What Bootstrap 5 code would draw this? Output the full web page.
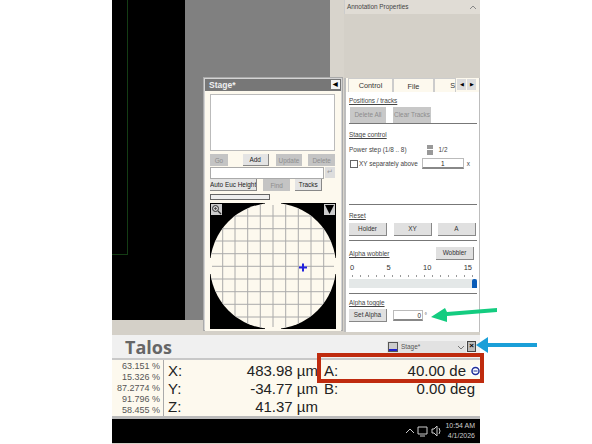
<!DOCTYPE html>
<html lang="en"><head><meta charset="utf-8"><title>Talos</title>
<link href="https://cdn.jsdelivr.net/npm/bootstrap@5.3.0/dist/css/bootstrap.min.css" rel="stylesheet">
<style>
html,body{margin:0;height:444px;width:592px;overflow:hidden;background:#fff;font-family:"Liberation Sans",Arial,sans-serif;font-size:6.4px;color:#333}
.app{width:368px;height:444px;margin-left:112px;position:relative;background:#d4d0c8}
.top-area{height:320px}
.black-pane{width:73px;background:#000}
.green-frame{width:16px;height:255px;border-right:1px solid #143c14;border-bottom:1px solid #143c14}
.grey-pane{width:145px;background:#808080}
.lane{width:14px;background:#d8d4cc}
.side-top{width:136px;background:#d4d0c8;color:#444}
.side-head{height:14px;padding:0 4px 0 2px;background:#e0dcd5;border-left:1px solid #ccc}
.strip{height:15px;background:#d4d0c8}
.head-bar{height:25px;background:#f0f0f0;padding:0 4px 0 13px;border-bottom:2px solid #c8c8c8}
.talos{font-size:18px;font-weight:700;color:#666;line-height:24px;font-family:"Open Sans","Liberation Sans",sans-serif}
.combo{width:79px;height:12px;background:#e2e2e2;font-size:6.4px;color:#555;margin-left:auto;margin-right:1px;line-height:12px;padding-right:2px}
.combo-ico{width:10px;height:10px;border:1px solid #555;background:linear-gradient(#ccc 70%,#22c 70%);margin:1px 3px 0 1px}
.chev{margin:5px 0 0 auto}
.close-x{width:9px;height:11px;background:#bbb;border:1px solid #444;font-size:8px;line-height:8px;text-align:center;color:#000;font-weight:700}
.readout{height:59px;background:#fdf9ee;border-bottom:3px solid #bbb}
.pct{width:52px;border-right:1px solid #aaa;text-align:right;padding:1px 3px 0 0;font-size:9px;line-height:11px;color:#555}
.pos{flex:1;font-size:15px;line-height:18px;color:#222;padding:2px 0 0 4px}
.rline{display:flex;height:18px}
.col-a{width:156px}.col-b{width:151px}
.rval{margin-left:auto;white-space:nowrap}
.xval{padding-right:6px}
.aval{padding-right:9px}
.taskbar{height:24px;background:#000;color:#ccc;font-size:7px;padding-right:5px}
.clock{text-align:right;line-height:10px}
.win{position:absolute;background:#d4d4d4;border:1px solid #aaa}
.stage-win{left:91px;top:77px;width:140px;height:254px;padding:1px}
.stage-title{height:12px;background:#777;color:#f0f0f0;font-size:8.500px;font-weight:700;line-height:12px;padding-left:4px}
.stage-pin{width:9px;height:9px;background:#f4f4f4;margin:1px 1px 0 auto;color:#000;font-size:6px;line-height:9px;text-align:center}
.stage-body{background:#fdf9ee;height:240px;padding:3px 6px 0 5px}
.listarea{height:57px;background:#fff;border:1px solid #bbb;margin-bottom:3px}
.sbtn{display:block;background:#e4e4e4;border:0;border-right:1px solid #888;border-bottom:1px solid #888;font-size:6.4px;color:#222;text-align:center;height:12px;line-height:11px;padding:0;white-space:nowrap;overflow:hidden}
.sbtn-off{background:#c4c4c4;color:#8d8d8d;border:0}
.w-go{width:18px;margin-right:15px}.w-add{width:26px;margin-right:7px}.w-upd{width:27px;margin-right:6px}.w-del{width:27px}
.w-auto{width:60px;margin-right:6px}.w-find{width:27px;margin-right:5px}.w-tr{width:27px}
.gap-row{margin-top:1px}
.txt-in{width:114px;height:12px;background:#fff;border:1px solid #aaa}
.enter-b{width:10px;height:11px;background:#ddd;margin-left:1px;color:#999;font-size:7px;line-height:10px;text-align:center}
.prog{width:60px;height:6px;border:1px solid #666;background:#eee;margin:3px 0 3px}
.side-win{left:232px;top:78px;width:136px;height:254px;background:#bdbdbd;border:0;padding:0 1px 0 2px}
.tabrow{height:14px;background:#fdf9ee;font-size:7.300px;line-height:14px;padding-left:2px}
.mytab{border:1px solid #ccc;border-bottom:0;text-align:center;color:#333;background:#fdf9ee}
.tab-on{width:45px}
.tab-b{width:41px;padding-top:1px}
.tab-c{width:22px;text-align:right}
.tabscroll{width:9px;height:11px;background:#ddd;font-size:5px;line-height:11px;text-align:center;color:#000;margin:1px 0 0 1px}
.panel-main{background:#fff;height:240px;padding:0 2px 0 3px;color:#444}
.psec{border-bottom:1px solid #777}
.u{text-decoration:underline;line-height:9px}
.gbtn{background:#c8c8c8;color:#8d8d8d;font-size:6.4px;border:0;height:16px;line-height:16px;padding:0;text-align:center;white-space:nowrap}
.w38{margin-right:7px}.w38b{margin-right:6px}
.rbtn{background:#e0e0e0;border:0;border-right:1px solid #888;border-bottom:1px solid #888;color:#333;font-size:6.4px;height:13px;line-height:12px;padding:0;text-align:center;width:38px;white-space:nowrap}
.spin{width:6px;height:10px;background:linear-gradient(#999 45%,#fff 45%,#fff 55%,#999 55%);margin:0 6px 0 20px}
.ck{width:8px;height:8px;border:1px solid #666;background:#fff;margin:0 1px}
.numin{width:42px;height:11px;background:#fff;border:1px solid #bbb;border-bottom:2px solid #888;text-align:center;color:#222;line-height:9px}
.track{height:9px;background:#e4e8e8;position:relative;margin-top:2px}
.thumb{position:absolute;right:0;top:0;width:5px;height:9px;background:#0a5cb8;border-radius:2px 2px 0 0}
.ticks{height:2px;margin:3px 3px 0;background:repeating-linear-gradient(90deg,#999 0,#999 1px,transparent 1px,transparent 8px)}
.scale{margin-top:3px;color:#333;font-size:7.500px;line-height:9px;padding:0 5px 0 1px}
.overlay{position:absolute;left:0;top:0;overflow:visible;pointer-events:none}
.red-box{position:absolute;left:205px;top:353px;width:167px;height:30px;border:4px solid #bf2b0e}
.ab-tag{position:absolute;left:359px;top:366px;width:9px;height:10px}
.sec1{height:32px;padding-top:4px}.sec2{height:81px;padding-top:6px}.sec3{height:36px;padding-top:6px}.sec4{height:53px;padding-top:6px}.sec5{padding-top:4px}
.map-svg{display:block}
</style></head><body>
<div class="app">
 <div class="top-area d-flex">
  <div class="black-pane"><div class="green-frame"></div></div>
  <div class="grey-pane"></div>
  <div class="lane"></div>
  <div class="side-top"><div class="side-head d-flex align-items-center justify-content-between"><span>Annotation Properties</span><svg width="6" height="4" viewBox="0 0 6 4" fill="none" stroke="#888"><path d="M0 4l3-3 3 3"/></svg></div></div>
 </div>
 <div class="strip"></div>
 <div class="head-bar d-flex align-items-center"><div class="talos">Talos</div>
  <div class="combo d-flex"><div class="combo-ico"></div><span>Stage*</span><svg class="chev" width="6" height="4" viewBox="0 0 6 4" fill="none" stroke="#777"><path d="M0 0l3 3 3-3"/></svg></div><div class="close-x">×</div></div>
 <div class="readout d-flex">
  <div class="pct">63.151 %<br>15.326 %<br>87.2774 %<br>91.796 %<br>58.455 %</div>
  <div class="pos d-flex">
   <div class="col-a"><div class="rline"><span>X:</span><span class="rval xval">483.98 µm</span></div><div class="rline"><span>Y:</span><span class="rval xval">-34.77 µm</span></div><div class="rline"><span>Z:</span><span class="rval xval">41.37 µm</span></div></div>
   <div class="col-b"><div class="rline"><span>A:</span><span class="rval aval">40.00 de</span></div><div class="rline"><span>B:</span><span class="rval">0.00 deg</span></div></div>
  </div>
 </div>
 <div class="taskbar d-flex align-items-center justify-content-end gap-2">
  <svg width="36" height="14" viewBox="0 0 36 14" fill="none" stroke="#ccc"><path d="M0 9l4-4 4 4"/><path d="M12 3h9v7h-9zM14 12h5"/><path d="M26 5v4h2l3 3V2l-3 3zM33 4q2 3 0 6"/></svg>
  <div class="clock">10:54 AM<br>4/1/2026</div>
 </div>

 <div class="win stage-win">
  <div class="stage-title d-flex">Stage*<div class="stage-pin">◀</div></div>
  <div class="stage-body">
   <div class="listarea"></div>
   <div class="d-flex"><button class="sbtn sbtn-off w-go">Go</button><button class="sbtn w-add">Add</button><button class="sbtn sbtn-off w-upd">Update</button><button class="sbtn sbtn-off w-del">Delete</button></div>
   <div class="d-flex gap-row"><div class="txt-in"></div><div class="enter-b">↵</div></div>
   <div class="d-flex"><button class="sbtn w-auto">Auto Euc Height</button><button class="sbtn sbtn-off w-find">Find</button><button class="sbtn w-tr">Tracks</button></div>
   <div class="prog"></div>
   <svg class="map-svg" width="126" height="126" viewBox="0 0 126 126">
    <defs><clipPath id="cc"><circle cx="63" cy="63" r="63"/></clipPath></defs>
    <rect width="126" height="126" fill="#000"/>
    <circle cx="63" cy="63" r="63" fill="#fdf9ee"/>
    <path d="M55 0h16v126H55zM0 55h126v16H0z" fill="#fdf9ee"/>
    <g clip-path="url(#cc)" stroke="#aaa" stroke-width="1">
     <path d="M12.700 0V126M25 0V126M37.700 0V126M50.300 0V126M63 2V124M75.700 0V126M88.300 0V126M101 0V126M113.700 0V126"/>
     <path d="M0 13H126M0 25.700H126M0 38H126M0 50.700H126M2 63.300H124M0 76H126M0 88.700H126M0 101.300H126M0 114H126"/>
    </g>
    <path d="M93 60.500v8M89 64.500h8" stroke="#2222dd" stroke-width="2"/>
    <rect x="1" y="1" width="11" height="11" fill="#ccc"/>
    <circle cx="5.500" cy="5.500" r="3" fill="none" stroke="#333"/><path d="M8 8l3 3" stroke="#333" stroke-width="1.300"/><path d="M4 5.500h3M5.500 4v3" stroke="#333" stroke-width=".7"/>
    <rect x="114" y="1" width="11" height="11" fill="#ccc"/><path d="M115 2h9l-4.500 9z" fill="#000"/>
   </svg>
  </div>
 </div>

 <div class="win side-win">
  <div class="tabrow d-flex"><div class="mytab tab-on">Control</div><div class="mytab tab-b">File</div><div class="mytab tab-c">S</div><div class="tabscroll">◀</div><div class="tabscroll">▶</div></div>
  <div class="panel-main">
   <div class="psec sec1"><div class="u">Positions / tracks</div><div class="d-flex" style="margin-top:2px"><button class="gbtn w38" style="width:36px;margin-left:1px">Delete All</button><button class="gbtn" style="width:38px">Clear Tracks</button></div></div>
   <div class="psec sec2"><div class="u">Stage control</div>
    <div class="d-flex align-items-center" style="margin-top:5px;height:12px"><span>Power step (1/8 .. 8)</span><div class="spin"></div><span>1/2</span></div>
    <div class="d-flex align-items-center" style="margin-top:2px"><div class="ck"></div><span>XY separately above</span><div class="numin ms-auto" style="margin-right:3px">1</div><span style="margin-right:7px">x</span></div></div>
   <div class="psec sec3"><div class="u">Reset</div><div class="d-flex" style="margin-top:3px"><button class="rbtn w38">Holder</button><button class="rbtn w38b">XY</button><button class="rbtn">A</button></div></div>
   <div class="psec sec4"><div class="d-flex align-items-center"><span class="u">Alpha wobbler</span><button class="rbtn ms-auto" style="margin-right:3px">Wobbler</button></div>
    <div class="d-flex justify-content-between scale"><span>0</span><span>5</span><span>10</span><span>15</span></div>
    <div class="ticks"></div><div class="track"><div class="thumb"></div></div></div>
   <div class="sec5"><div class="u">Alpha toggle</div><div class="d-flex align-items-center" style="margin-top:2px"><button class="rbtn" style="margin-right:6px">Set Alpha</button><div class="numin" style="width:30px;text-align:right;padding-right:1px">0</div><span class="ms-1">°</span></div></div>
  </div>
 </div>
 <div class="red-box"></div>
 <svg class="ab-tag" viewBox="0 0 9 10"><rect width="9" height="10" fill="#fff"/><circle cx="4.500" cy="5" r="3.500" fill="none" stroke="#22309a" stroke-width="1.500"/><path d="M2.500 5h4" stroke="#22309a"/></svg>
 <svg class="overlay" width="480" height="444" viewBox="0 0 480 444"><path d="M319 317L333 308L335 312L385 308L385 312L335 316L335 322Z" fill="#14cc80"/><path d="M364 345L376 337L376 343L425 343L425 347L376 347L376 353Z" fill="#1a9fd8"/></svg>
</div>
</body></html>
